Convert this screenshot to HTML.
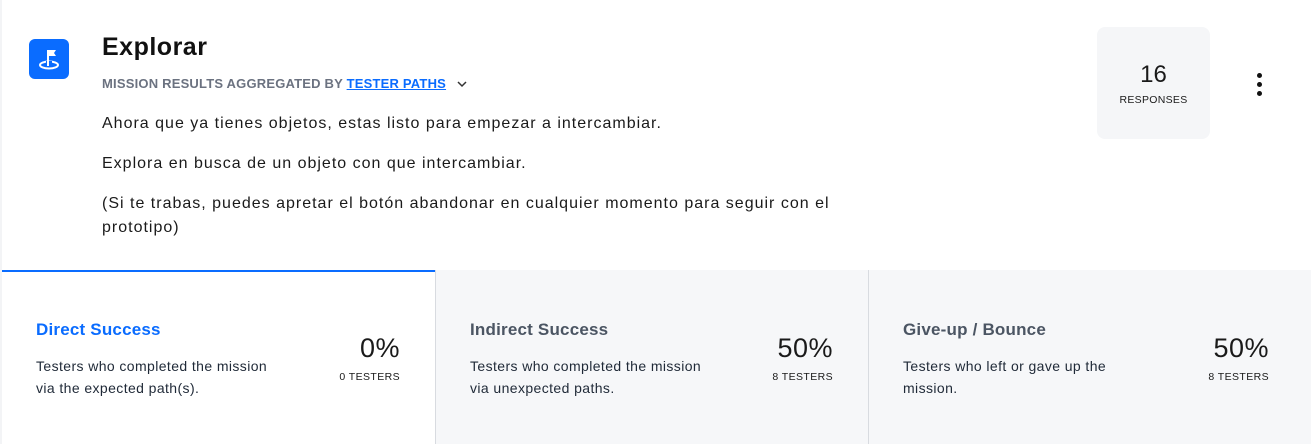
<!DOCTYPE html>
<html><head><style>
*{margin:0;padding:0;box-sizing:border-box}
body{width:1311px;height:444px;background:#fff;font-family:"Liberation Sans",sans-serif;color:#1a1a1a;position:relative;overflow:hidden}
.abs{position:absolute}
.icon{left:29px;top:39px;width:40px;height:40px;background:#0a6cff;border-radius:6px}
.sub{left:102px;top:76px;font-size:13px;color:#6b7280;font-weight:700;letter-spacing:.2px}
.sub a{color:#0a6cff;text-decoration:underline}
.p{left:102px;font-size:16px;color:#1a1a1a;width:760px;line-height:24px;letter-spacing:1px}
.resp{left:1097px;top:27px;width:113px;height:112px;background:#f5f6f8;border-radius:8px;text-align:center}
.resp b{display:block;font-weight:400;font-size:24px;margin-top:34px}
.resp span{display:block;font-size:10.5px;margin-top:5px;letter-spacing:.3px}
.dots{left:1257px;top:73px}
.dots i{display:block;width:5px;height:5px;border-radius:50%;background:#111;margin-bottom:4px}
.panel{top:270px;height:174px;background:#f6f7f9;border-left:1px solid #d8dbe0}
.panel .t{position:absolute;left:34px;top:50px;font-size:17px;color:#4b5563;font-weight:700;letter-spacing:.2px}
.panel .d{position:absolute;left:34px;top:85px;font-size:14px;line-height:22px;color:#1f2937;width:250px;letter-spacing:.4px}
.panel .n{position:absolute;right:36px;top:63px;font-size:27px;text-align:right;font-weight:400;letter-spacing:.5px}
.panel .s{position:absolute;right:36px;top:101px;font-size:10.5px;letter-spacing:.4px}
</style></head><body>
<div class="abs" style="left:0;top:0;width:2px;height:444px;background:#f3f4f6"></div>
<div class="abs icon"><svg width="40" height="40" viewBox="0 0 40 40"><path d="M19 11v14" stroke="#fff" stroke-width="2"/><path d="M20 11h7l-2 3 2 3h-7z" fill="#fff"/><ellipse cx="20" cy="26" rx="9" ry="3.5" fill="none" stroke="#fff" stroke-width="2"/><rect x="17" y="22" width="6" height="6" fill="#0a6cff"/><path d="M19 21v6" stroke="#fff" stroke-width="2"/></svg></div>
<div class="abs" style="left:102px;top:33px;font-size:25px;font-weight:700;color:#111;letter-spacing:.5px">Explorar</div>
<div class="abs sub">MISSION RESULTS AGGREGATED BY <a>TESTER PATHS</a> <svg width="12" height="8" viewBox="0 0 12 8" style="margin-left:6px"><path d="M2 2l4 4 4-4" stroke="#333" stroke-width="1.5" fill="none"/></svg></div>
<div class="abs p" style="top:112px">Ahora que ya tienes objetos, estas listo para empezar a intercambiar.</div>
<div class="abs p" style="top:152px">Explora en busca de un objeto con que intercambiar.</div>
<div class="abs p" style="top:192px">(Si te trabas, puedes apretar el botón abandonar en cualquier momento para seguir con el prototipo)</div>
<div class="abs resp"><b>16</b><span>RESPONSES</span></div>
<div class="abs dots"><i></i><i></i><i></i></div>
<div class="abs panel" style="left:2px;width:434px;background:#fff;border-left:none;border-top:2px solid #0a6cff"><div class="t" style="color:#0a6cff;top:48px">Direct Success</div><div class="d" style="top:83px">Testers who completed the mission via the expected path(s).</div><div class="n" style="top:61px">0%</div><div class="s" style="top:99px">0 TESTERS</div></div>
<div class="abs panel" style="left:435px;width:434px"><div class="t">Indirect Success</div><div class="d">Testers who completed the mission via unexpected paths.</div><div class="n">50%</div><div class="s">8 TESTERS</div></div>
<div class="abs panel" style="left:868px;width:443px"><div class="t">Give-up / Bounce</div><div class="d" style="width:230px">Testers who left or gave up the mission.</div><div class="n" style="right:42px">50%</div><div class="s" style="right:42px">8 TESTERS</div></div>
</body></html>
